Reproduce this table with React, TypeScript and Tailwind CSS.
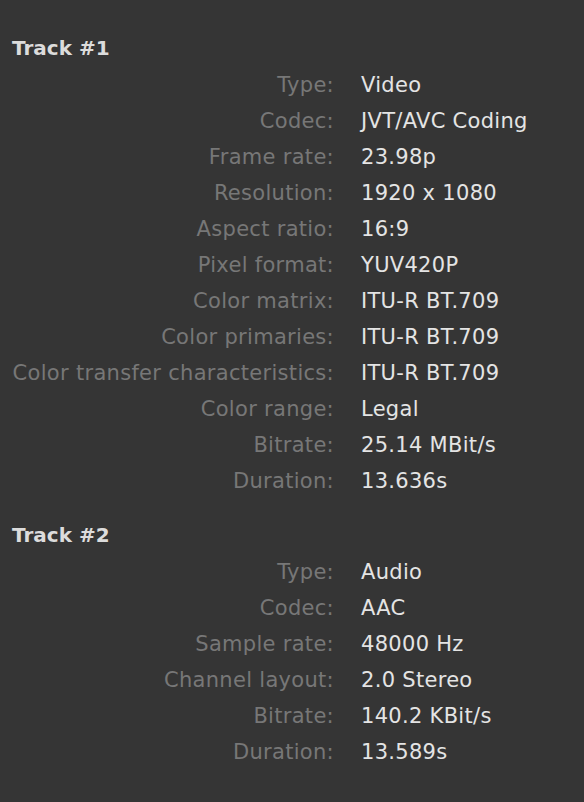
import React from "react";

type Row = { label: string; value: string };

const tracks: { title: string; rows: Row[] }[] = [
  {
    title: "Track #1",
    rows: [
      { label: "Type:", value: "Video" },
      { label: "Codec:", value: "JVT/AVC Coding" },
      { label: "Frame rate:", value: "23.98p" },
      { label: "Resolution:", value: "1920 x 1080" },
      { label: "Aspect ratio:", value: "16:9" },
      { label: "Pixel format:", value: "YUV420P" },
      { label: "Color matrix:", value: "ITU-R BT.709" },
      { label: "Color primaries:", value: "ITU-R BT.709" },
      { label: "Color transfer characteristics:", value: "ITU-R BT.709" },
      { label: "Color range:", value: "Legal" },
      { label: "Bitrate:", value: "25.14 MBit/s" },
      { label: "Duration:", value: "13.636s" },
    ],
  },
  {
    title: "Track #2",
    rows: [
      { label: "Type:", value: "Audio" },
      { label: "Codec:", value: "AAC" },
      { label: "Sample rate:", value: "48000 Hz" },
      { label: "Channel layout:", value: "2.0 Stereo" },
      { label: "Bitrate:", value: "140.2 KBit/s" },
      { label: "Duration:", value: "13.589s" },
    ],
  },
];

const App = () => {
  return (
    <div className="min-h-[802px] w-[584px] bg-[#353535] pt-[30px] font-['DejaVu_Sans',sans-serif] text-[21px] tracking-[0.3px]">
      {tracks.map((track, i) => (
        <div key={track.title} className={i > 0 ? "mt-[17px]" : ""}>
          <h3 className="h-9 flex items-center pl-3 text-[20px] tracking-normal font-bold text-[#dcdcdc]">
            {track.title}
          </h3>

          <div className="mt-[2px] grid grid-cols-[334px_1fr] gap-x-[27px]">
            {track.rows.map((row) => (
              <React.Fragment key={row.label}>
                <div className="h-9 flex items-center justify-end text-[#777777] whitespace-nowrap">
                  {row.label}
                </div>
                <div className="h-9 flex items-center text-[#e4e4e4] whitespace-nowrap">
                  {row.value}
                </div>
              </React.Fragment>
            ))}
          </div>
        </div>
      ))}
    </div>
  );
};

export default App;
